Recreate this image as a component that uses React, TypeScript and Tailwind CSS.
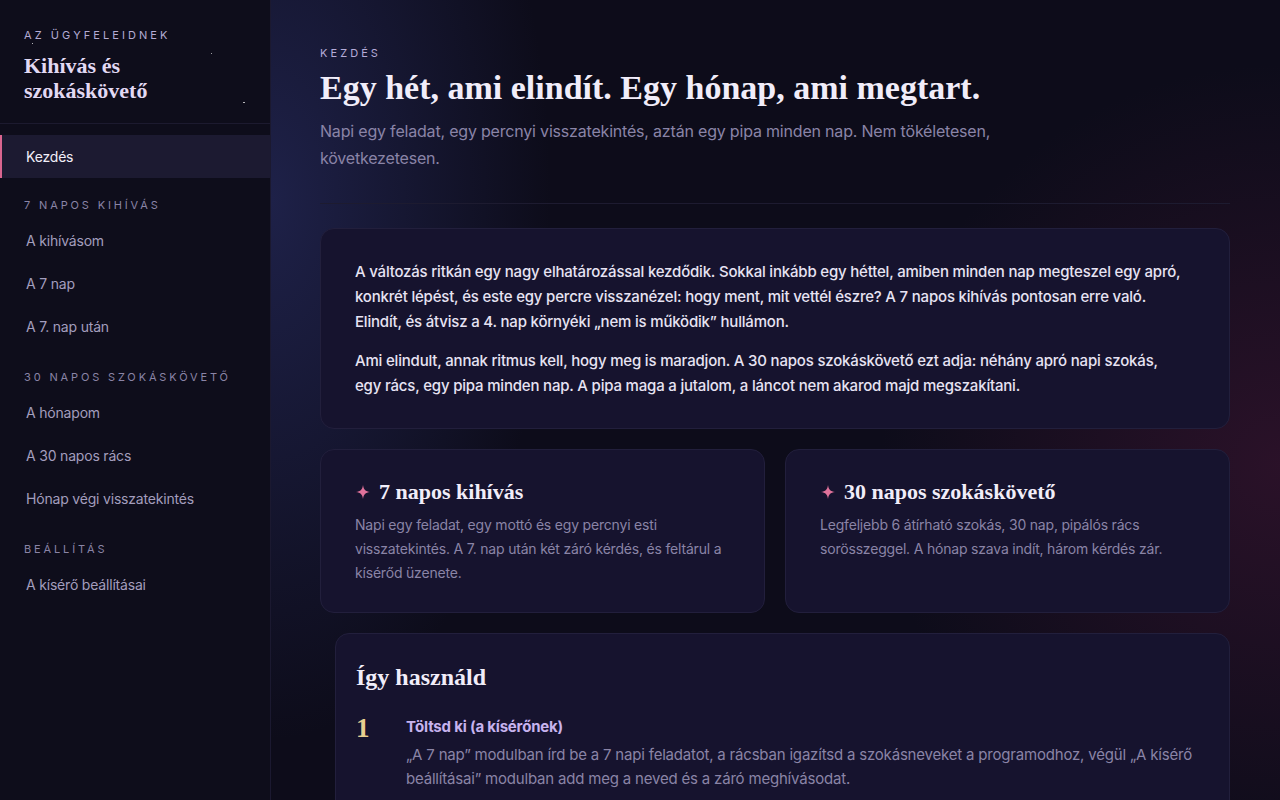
const serif = "font-['Liberation_Serif','DejaVu_Serif',serif]";

const sections = [
  { title: "7 napos kihívás", items: ["A kihívásom", "A 7 nap", "A 7. nap után"] },
  { title: "30 napos szokáskövető", items: ["A hónapom", "A 30 napos rács", "Hónap végi visszatekintés"] },
  { title: "Beállítás", items: ["A kísérő beállításai"] },
];

const cards = [
  {
    t: "7 napos kihívás",
    d: "Napi egy feladat, egy mottó és egy percnyi esti visszatekintés. A 7. nap után két záró kérdés, és feltárul a kísérőd üzenete.",
  },
  {
    t: "30 napos szokáskövető",
    d: "Legfeljebb 6 átírható szokás, 30 nap, pipálós rács sorösszeggel. A hónap szava indít, három kérdés zár.",
  },
];

function Star() {
  return (
    <svg width="16" height="16" viewBox="0 0 16 16" className="shrink-0">
      <path d="M8 1 C8.6 5.6 10.4 7.4 15 8 C10.4 8.6 8.6 10.4 8 15 C7.4 10.4 5.6 8.6 1 8 C5.6 7.4 7.4 5.6 8 1 Z" fill="#e0729b" />
    </svg>
  );
}

function Sidebar() {
  return (
    <aside className="relative w-[271px] shrink-0 h-full bg-[#0e0d1b] border-r border-[#1b1930] flex flex-col">
      <span className="absolute left-[32px] top-[43px] w-[1px] h-[1px] bg-white/70" />
      <span className="absolute left-[211px] top-[53px] w-[1px] h-[1px] bg-white/60" />
      <span className="absolute left-[243px] top-[102px] w-[2px] h-[1px] bg-white/70" />
      <div className="px-6 pt-[28px] pb-[20px] border-b border-[#1c1a2f]">
        <div className="text-[11px] tracking-[0.28em] text-[#b3abd3] leading-[14px]">AZ ÜGYFELEIDNEK</div>
        <div className={`${serif} mt-[11px] text-[22px] leading-[25px] font-bold tracking-normal text-[#e2d9f3]`}>
          Kihívás és
          <br />
          szokáskövető
        </div>
      </div>
      <nav className="pt-[11px]">
        <div className="relative h-[43px] flex items-center pl-[26px] bg-[#1c1a31] text-[14px] text-[#f1eef8]">
          <span className="absolute left-0 top-0 bottom-0 w-[2px] bg-[#d9658f]" />
          Kezdés
        </div>
        {sections.map((s, i) => (
          <div key={s.title} className={i === 0 ? "mt-[20px]" : "mt-[22px]"}>
            <div className="pl-6 text-[11px] tracking-[0.26em] uppercase text-[#8a84a6] leading-[14px]">{s.title}</div>
            <div className="mt-[7px]">
              {s.items.map((it) => (
                <div key={it} className="h-[43px] flex items-center pl-[26px] text-[14px] text-[#a39dbd]">
                  {it}
                </div>
              ))}
            </div>
          </div>
        ))}
      </nav>
    </aside>
  );
}

export default function App() {
  return (
    <div className="h-screen w-full flex overflow-hidden bg-[#0d0c1a] font-['Inter','Noto_Sans',sans-serif] tracking-[-0.012em]">
      <Sidebar />
      <main className="flex-1 h-full overflow-hidden bg-[radial-gradient(ellipse_280px_540px_at_0%_25%,rgba(44,50,110,0.55),transparent),radial-gradient(ellipse_400px_400px_at_100%_58%,rgba(78,24,58,0.45),transparent)]">
        <div className="pl-[49px] pr-[50px] pt-[46px]">
          <div className="text-[11px] tracking-[0.28em] text-[#b5abd8] leading-[14px]">KEZDÉS</div>
          <h1 className={`${serif} mt-[8px] text-[34px] leading-[40px] font-bold tracking-normal text-[#f1edf9]`}>
            Egy hét, ami elindít. Egy hónap, ami megtart.
          </h1>
          <p className="mt-[10px] max-w-[700px] text-[16px] leading-[27px] text-[#8a84a7]">
            Napi egy feladat, egy percnyi visszatekintés, aztán egy pipa minden nap. Nem tökéletesen, következetesen.
          </p>
          <div className="mt-[31px] h-px bg-[#1d1b30]" />

          <section className="mt-[24px] rounded-[14px] bg-[#16132e] border border-[#221f3c] px-[34px] pt-[30px] pb-[30px] text-[15px] leading-[25px] font-medium text-[#e7e3f3]">
            <p className="text-pretty">
              A változás ritkán egy nagy elhatározással kezdődik. Sokkal inkább egy héttel, amiben minden nap megteszel egy apró,
              konkrét lépést, és este egy percre visszanézel: hogy ment, mit vettél észre? A 7 napos kihívás pontosan erre való.
              Elindít, és átvisz a 4. nap környéki „nem is működik” hullámon.
            </p>
            <p className="mt-[14px]">
              Ami elindult, annak ritmus kell, hogy meg is maradjon. A 30 napos szokáskövető ezt adja: néhány apró napi szokás,{" "}
              <span className="whitespace-nowrap">egy rács,</span> egy pipa minden nap. A pipa maga a jutalom, a láncot nem akarod
              majd megszakítani.
            </p>
          </section>

          <div className="mt-[20px] grid grid-cols-2 gap-[20px]">
            {cards.map((c) => (
              <div key={c.t} className="h-[164px] rounded-[14px] bg-[#16132e] border border-[#221f3c] px-[34px] pt-[29px]">
                <div className="flex items-center gap-[8px]">
                  <Star />
                  <h3 className={`${serif} text-[22px] leading-[26px] font-bold tracking-normal text-[#f1edf9]`}>{c.t}</h3>
                </div>
                <p className="mt-[8px] text-[14px] leading-[24px] text-[#8a84a6]">{c.d}</p>
              </div>
            ))}
          </div>

          <section className="mt-[20px] ml-[15px] rounded-[14px] bg-[#16132e] border border-[#221f3c] pl-[20px] pr-[34px] pt-[28px] pb-[30px]">
            <h2 className={`${serif} text-[24px] leading-[30px] font-bold tracking-normal text-[#f1edf9]`}>Így használd</h2>
            <div className="mt-[24px] flex">
              <div className={`${serif} w-[50px] shrink-0 text-[27px] leading-[24px] font-bold tracking-normal text-[#e8cf90]`}>1</div>
              <div>
                <div className="text-[15px] leading-[22px] font-bold text-[#c7b3ee]">Töltsd ki (a kísérőnek)</div>
                <p className="mt-[5px] text-[15px] leading-[24px] text-[#8a84a6]">
                  „A 7 nap” modulban írd be a 7 napi feladatot, a rácsban igazítsd a szokásneveket a programodhoz, végül „A kísérő
                  beállításai” modulban add meg a neved és a záró meghívásodat.
                </p>
              </div>
            </div>
          </section>
        </div>
      </main>
    </div>
  );
}
